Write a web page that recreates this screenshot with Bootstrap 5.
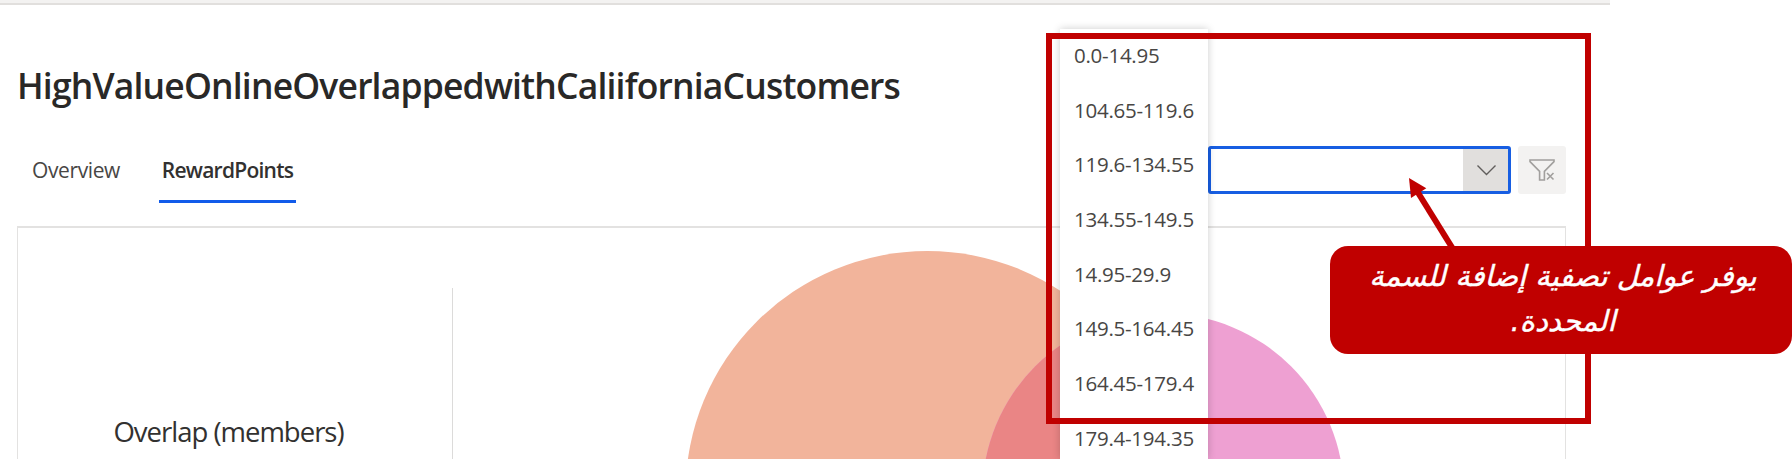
<!DOCTYPE html>
<html lang="en">
<head>
<meta charset="utf-8">
<meta name="viewport" content="width=device-width, initial-scale=1">
<title>HighValueOnlineOverlappedwithCaliiforniaCustomers</title>
<link href="https://cdn.jsdelivr.net/npm/bootstrap@5.3.0/dist/css/bootstrap.min.css" rel="stylesheet">
<style>
  body { font-family: "Open Sans", "Noto Sans", sans-serif; color: #323130; background: #fff; }
  .stage { width: 1792px; height: 459px; }
  .app { width: 1610px; height: 459px; }
  .topbar { height: 5px; background: #f3f2f1; border-bottom: 2px solid #e1dfdd; }
  .page-title { font-size: 35.5px; font-weight: 600; line-height: 48px; margin: 56px 0 0 17px; letter-spacing: -.83px; color: #292827; white-space: nowrap; }
  .toolbar-row { height: 58px; margin: 36px 44px 0 16px; }
  .tabs-line { gap: 24px; }
  .tabs-line .nav-link { padding: 0; height: 58px; line-height: 50px; font-size: 21px; letter-spacing: -.4px; color: #484644; white-space: nowrap; }
  .tab-a { width: 120px; margin-right: -1px; text-align: center; }
  .tabs-line .tab-b { width: 137px; text-align: center; font-weight: 600; color: #323130; border-bottom: 3px solid #115bea; letter-spacing: -.75px; }
  .filter-tools { gap: 7px; padding-top: 1px; }
  .combo { width: 303px; height: 48px; border: 3px solid #175ee2; border-radius: 3px; background: #fff; }
  .combo .caret { width: 45px; background: #e1dfdd; }
  .btn-clear { width: 48px; height: 48px; background: #f3f2f1; border-radius: 3px; }
  .panel { margin: 23px 44px 0 17px; height: 234px; border: 2px solid #e3e2e1; border-width: 2px 1.5px 0 1px; }
  .metric { width: 435px; height: 172px; margin-top: 60px; border-right: 1px solid #dcdbda; padding-top: 125px; padding-right: 13px; font-size: 27.5px; letter-spacing: -1px; line-height: 38px; font-weight: 400; white-space: nowrap; }
  .menu-list { left: 1060px; top: 29px; width: 148px; height: 430px; background: #fff; box-shadow: 0 0 8px rgba(0,0,0,.2); overflow: hidden; }
  .menu-list li { height: 54.67px; line-height: 53px; padding-left: 14px; font-size: 20.5px; letter-spacing: -.25px; color: #484644; white-space: nowrap; }
  .frame { left: 1046px; top: 33px; width: 545px; height: 391px; border: 6px solid #c00000; }
  .arrow { left: 1400px; top: 170px; }
  .callout { left: 1330px; top: 246px; width: 462px; height: 108px; border-radius: 18px; background: #c00000; color: #fff; font: italic 29px/45px "DejaVu Sans", sans-serif; padding: 8px 0 0 4px; -webkit-text-stroke: .4px #fff; }
  .callout span { white-space: nowrap; }
</style>
</head>
<body>
<div class="stage position-relative overflow-hidden">
  <div class="app">
    <div class="topbar"></div>
    <h1 class="page-title">HighValueOnlineOverlappedwithCaliiforniaCustomers</h1>
    <div class="toolbar-row d-flex justify-content-between">
      <nav class="nav tabs-line">
        <a class="nav-link tab-a" href="#">Overview</a>
        <a class="nav-link tab-b" href="#">RewardPoints</a>
      </nav>
      <div class="filter-tools d-flex">
        <div class="combo d-flex justify-content-end">
          <div class="caret d-flex align-items-center justify-content-center">
            <svg width="20" height="12" viewBox="0 0 20 12" fill="none" stroke="#605e5c" stroke-width="1.4"><path d="M1.500 1.500l9 9 9-9"/></svg>
          </div>
        </div>
        <div class="btn-clear d-flex align-items-center justify-content-center">
          <svg width="26" height="24" viewBox="0 0 26 24" fill="none" stroke="#a19f9d" stroke-width="1.6"><path d="M1 2h24v1.600l-9.600 9.800V22h-4.800v-8.600L1 3.600z"/><path d="M18 15l6.500 6.500M24.500 15L18 21.500"/></svg>
        </div>
      </div>
    </div>
    <section class="panel d-flex">
      <div class="metric text-center">Overlap (members)</div>
      <svg class="flex-grow-1" height="232" viewBox="453 227 1111 232" preserveAspectRatio="xMinYMin slice">
        <clipPath id="segA"><circle cx="927" cy="491.700" r="241.700"/></clipPath>
        <circle cx="927" cy="491.700" r="241.700" fill="#f2b49b"/>
        <circle cx="1162.500" cy="493" r="180.700" fill="#eea0d2"/>
        <circle cx="1162.500" cy="493" r="180.700" fill="#ea8585" clip-path="url(#segA)"/>
      </svg>
    </section>
  </div>
  <ul class="menu-list list-unstyled position-absolute m-0">
    <li>0.0-14.95</li>
    <li>104.65-119.6</li>
    <li>119.6-134.55</li>
    <li>134.55-149.5</li>
    <li>14.95-29.9</li>
    <li>149.5-164.45</li>
    <li>164.45-179.4</li>
    <li>179.4-194.35</li>
  </ul>
  <div class="frame position-absolute"></div>
  <svg class="arrow position-absolute" width="60" height="80" viewBox="1400 170 60 80"><path d="M1417 191L1453 249" stroke="#c00000" stroke-width="6"/><path d="M1409 178l17.300 10.300-15.300 9.700z" fill="#c00000"/></svg>
  <div class="callout position-absolute text-center" dir="rtl" lang="ar"><span>يوفر عوامل تصفية إضافة للسمة</span><br><span>المحددة.</span></div>
</div>
<script src="https://cdn.jsdelivr.net/npm/bootstrap@5.3.0/dist/js/bootstrap.bundle.min.js"></script>
</body>
</html>
